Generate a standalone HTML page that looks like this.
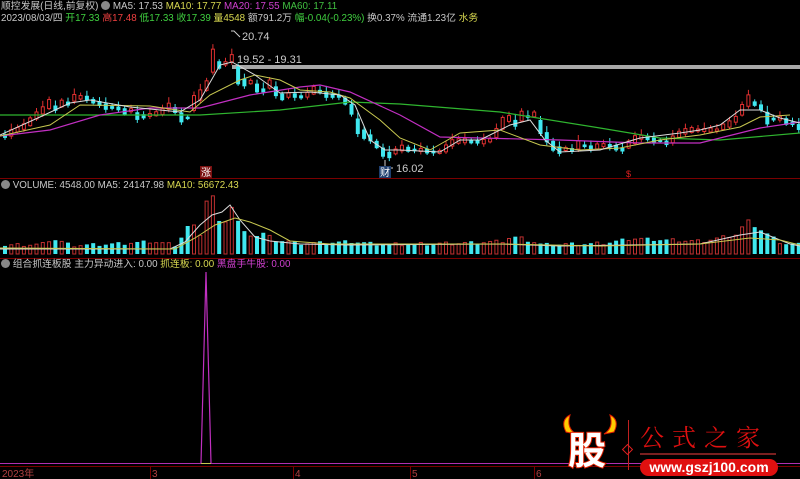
<!DOCTYPE html>
<html><head><meta charset="utf-8"><style>
html,body{margin:0;padding:0;background:#000;width:800px;height:479px;overflow:hidden}
body{font-family:"Liberation Sans","Noto Sans CJK SC",sans-serif;font-size:9.8px;color:#c8c8c8;position:relative}
.t{position:absolute;white-space:nowrap;line-height:12px}
svg{position:absolute;left:0;top:0}
</style></head><body>
<svg id="s" width="800" height="479" viewBox="0 0 800 479">
<line x1="0" y1="178.5" x2="800" y2="178.5" stroke="#7a0000"/>
<line x1="0" y1="258.5" x2="800" y2="258.5" stroke="#7a0000"/>
<line x1="0" y1="466.5" x2="800" y2="466.5" stroke="#7a0000"/>
<rect x="232" y="65" width="568" height="4" fill="#a8a8a8"/>
<g id="c"></g>
<polyline fill="none" stroke="#2fb52f" stroke-width="1.2" points="0,115 200,115 280,110 350,102 400,104 500,112 600,128 660,138 720,140 800,133"/>
<polyline fill="none" stroke="#c22fc2" stroke-width="1.2" points="0,136 50,130 100,115 150,108 200,108 250,95 300,87 320,85 350,92 400,115 440,137 480,138 560,140 640,143 700,143 760,128 800,122"/>
<polyline fill="none" stroke="#c8c850" stroke-width="1" points="0,136 50,125 80,105 150,106 190,112 210,95 240,80 255,75 280,80 300,90 330,92 350,98 380,120 400,138 430,150 460,133 500,130 540,145 580,150 620,148 660,140 700,135 740,127 760,117 790,115"/>
<polyline fill="none" stroke="#dcdcdc" stroke-width="1" points="0,135 40,117 70,103 90,100 130,107 180,112 200,100 220,65 232,62 255,75 280,93 310,92 340,95 355,105 370,140 385,150 400,150 440,152 460,140 480,140 510,125 530,120 545,140 560,152 600,150 640,138 680,133 700,130 720,125 740,110 760,110 780,118 800,123"/>
<polyline fill="none" stroke="#ccc" points="240,37 234,31 231,31"/>
<text x="242" y="40" fill="#ccc" font-size="11" font-family="Liberation Sans">20.74</text>
<text x="237" y="63" fill="#ccc" font-size="11" font-family="Liberation Sans">19.52 - 19.31</text>
<polyline fill="none" stroke="#ccc" points="385,160 385,168 393,168"/>
<text x="396" y="172" fill="#ccc" font-size="11" font-family="Liberation Sans">16.02</text>
<rect x="200" y="166" width="12" height="12" fill="#7a1010"/>
<text x="201" y="176" fill="#fff" font-size="10" font-family="Noto Sans CJK SC">涨</text>
<rect x="379" y="166" width="12" height="12" fill="#1e3e6e"/>
<text x="380" y="176" fill="#fff" font-size="10" font-family="Noto Sans CJK SC">财</text>
<text x="626" y="177" fill="#e02020" font-size="9" font-family="Liberation Sans">$</text>
<g id="v"></g>
<polyline fill="none" stroke="#dcdcdc" stroke-width="1" points="0,249 170,249 185,242 200,225 212,215 222,212 230,205 240,220 255,237 270,241 300,244 350,245 500,244 560,246 700,244 740,235 760,232 790,244 800,246"/>
<polyline fill="none" stroke="#c8c850" stroke-width="1" points="0,248 175,249 195,238 215,225 235,218 250,222 270,230 290,241 330,244 500,244 600,246 700,244 750,238 780,240 800,245"/>
<line x1="0" y1="463.5" x2="800" y2="463.5" stroke="#b030b0"/>
<line x1="201" y1="463.5" x2="211" y2="463.5" stroke="#c8c850"/>
<polyline fill="none" stroke="#c030c0" stroke-width="1.2" points="201,463 206,272 211,463"/>
<g stroke="#7a0000">
<line x1="150.5" y1="466" x2="150.5" y2="479"/><line x1="293.5" y1="466" x2="293.5" y2="479"/><line x1="410.5" y1="466" x2="410.5" y2="479"/><line x1="534.5" y1="466" x2="534.5" y2="479"/>
</g>
<g font-family="Liberation Sans,Noto Sans CJK SC" font-size="10" fill="#b04040">
<text x="2" y="477">2023年</text><text x="152" y="477">3</text><text x="295" y="477">4</text><text x="412" y="477">5</text><text x="536" y="477">6</text></g>
<path d="M566 432 Q560 420 570 415 Q566 428 576 434Z" fill="#ffcc00" stroke="#e02000"/>
<path d="M614 432 Q620 420 610 415 Q614 428 604 434Z" fill="#ffcc00" stroke="#e02000"/>
<text x="568" y="464" font-size="38" font-weight="bold" fill="#fff" stroke="#e02000" stroke-width="2" paint-order="stroke" font-family="Noto Sans CJK SC">股</text>
<line x1="628.5" y1="420" x2="628.5" y2="470" stroke="#c02020"/>
<rect x="624" y="446" width="7" height="7" fill="none" stroke="#e02020" transform="rotate(45 627.5 449.5)"/>
<text x="640" y="446" font-size="24" fill="#e01010" font-family="Noto Serif CJK SC" letter-spacing="8">公式之家</text>
<line x1="640" y1="454" x2="776" y2="454" stroke="#7a2020" stroke-width="2"/>
<rect x="640" y="459" width="138" height="17" rx="8.5" fill="#e01010"/>
<text x="709" y="472" font-size="14" font-weight="bold" fill="#fff" text-anchor="middle" font-family="Liberation Sans">www.gszj100.com</text>
</svg>
<div class="t" style="left:1px;top:1px"><span>顺控发展(日线,前复权)</span> <span style="display:inline-block;width:9px;height:9px;border-radius:50%;background:#888;vertical-align:-1px"></span> MA5: 17.53 <span style="color:#d8d850">MA10: 17.77</span> <span style="color:#d040d0">MA20: 17.55</span> <span style="color:#40c040">MA60: 17.11</span></div>
<div class="t" style="left:1px;top:13px">2023/08/03/四 <span style="color:#40d040">开17.33</span> <span style="color:#f04040">高17.48</span> <span style="color:#40d040">低17.33</span> <span style="color:#40d040">收17.39</span> <span style="color:#d8d850">量4548</span> 额791.2万 <span style="color:#40d040">幅-0.04(-0.23%)</span> 换0.37% 流通1.23亿 <span style="color:#d8d850">水务</span></div>
<div class="t" style="left:1px;top:180px"><span style="display:inline-block;width:9px;height:9px;border-radius:50%;background:#888;vertical-align:-1px"></span> VOLUME: 4548.00 MA5: 24147.98 <span style="color:#d8d850">MA10: 56672.43</span></div>
<div class="t" style="left:1px;top:259px"><span style="display:inline-block;width:9px;height:9px;border-radius:50%;background:#888;vertical-align:-1px"></span> 组合抓连板股 主力异动进入: 0.00 <span style="color:#d8d850">抓连板: 0.00</span> <span style="color:#d040d0">黑盘手牛股: 0.00</span></div>
<script>
var mp=[[5,135],[15,130],[25,125],[35,115],[45,107],[50,100],[55,112],[60,103],[65,105],[70,98],[82,97],[90,100],[95,105],[100,102],[105,108],[115,107],[120,112],[130,110],[137,118],[145,115],[150,115],[160,112],[165,107],[170,105],[175,113],[180,118],[185,120],[190,105],[195,100],[205,85],[210,60],[217,65],[225,63],[230,58],[237,78],[243,83],[249,82],[255,88],[260,93],[265,83],[270,85],[275,93],[280,97],[285,95],[290,95],[300,97],[305,95],[310,92],[315,87],[320,94],[325,95],[335,96],[340,97],[350,110],[355,125],[360,133],[367,137],[372,140],[378,150],[385,155],[390,155],[395,150],[400,148],[410,150],[420,150],[430,152],[440,152],[450,143],[460,140],[470,142],[480,142],[490,140],[500,124],[506,118],[510,120],[516,126],[520,115],[525,118],[530,110],[540,130],[550,145],[560,152],[565,148],[570,150],[576,145],[580,145],[590,148],[600,145],[610,146],[620,150],[625,146],[632,140],[640,137],[645,138],[650,140],[660,141],[665,143],[670,140],[680,132],[690,130],[700,130],[715,130],[720,128],[725,123],[730,125],[740,110],[745,100],[750,102],[760,108],[765,118],[770,120],[775,117],[780,119],[785,122],[790,123],[796,127]];
var vp=[[0,247],[40,246],[50,240],[70,247],[120,245],[150,243],[175,247],[185,228],[193,228],[198,237],[205,200],[210,194],[217,224],[223,223],[230,208],[237,225],[242,234],[248,236],[255,237],[260,234],[272,241],[300,245],[350,243],[380,246],[450,245],[500,243],[510,238],[520,240],[540,246],[600,245],[630,240],[700,243],[735,236],[745,222],[760,232],[780,245],[800,246]];
function it(a,x){for(var i=1;i<a.length;i++){if(x<=a[i][0]){var p=a[i-1],q=a[i];return p[1]+(q[1]-p[1])*(x-p[0])/(q[0]-p[0]);}}return a[a.length-1][1];}
var c='',v='',prev=135,k=0;
for(var x=3;x<800;x+=6.3){k++;var y=it(mp,x),up=y<=prev;var col=up?'#e03030':'#40e8f0';var h=Math.max(2,Math.abs(y-prev)*0.8+2+(k%3));var t=y-h/2;
var wh=2+(k*7%5);c+='<line x1="'+(x+2)+'" y1="'+(t-wh)+'" x2="'+(x+2)+'" y2="'+(t+h+wh/2)+'" stroke="'+col+'"/>';
c+=up?'<rect x="'+(x+.5)+'" y="'+t+'" width="3" height="'+h+'" fill="#000" stroke="'+col+'"/>':'<rect x="'+x+'" y="'+t+'" width="4" height="'+h+'" fill="'+col+'"/>';
var vt=it(vp,x)-(k*13%4);v+=up?'<rect x="'+(x+.5)+'" y="'+vt+'" width="3" height="'+(254-vt)+'" fill="none" stroke="#c03030"/>':'<rect x="'+x+'" y="'+vt+'" width="4" height="'+(254-vt)+'" fill="#40e8f0"/>';prev=y;}
document.getElementById('c').innerHTML=c;document.getElementById('v').innerHTML=v;
</script>
</body></html>
